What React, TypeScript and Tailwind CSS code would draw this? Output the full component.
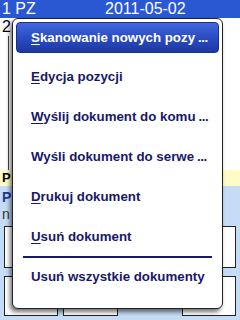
import React from "react";

const font = { fontFamily: '"Liberation Sans", Arial, sans-serif' };

const menuItems = [
  { first: "E", rest: "dycja pozycji", more: false },
  { first: "W", rest: "yślij dokument do komu", more: true },
  { first: "", rest: "Wyśli dokument do serwe", more: true },
  { first: "D", rest: "rukuj dokument", more: false },
  { first: "U", rest: "suń dokument", more: false },
];

function Dots() {
  return <span className="tracking-[-0.5px] ml-[3px]">...</span>;
}

function ContextMenu() {
  return (
    <div className="absolute left-[12px] top-[18px] w-[211px] h-[291px] rounded-[6px] border border-[#222] bg-white shadow-[-2px_3px_4px_rgba(0,0,0,0.55)] px-[3px] pt-[3px] text-[13.3px] font-bold">
      <div className="h-[31px] rounded-[4px] border border-[#1a2f8a] bg-gradient-to-b from-[#4468dc] via-[#2a4cc4] to-[#1d38a2] flex items-center pl-[14px] text-white whitespace-nowrap">
        <span>
          <span className="underline underline-offset-2">S</span>kanowanie nowych pozy
          <Dots />
        </span>
      </div>
      <div className="flex flex-col">
        {menuItems.map((it) => (
          <div
            key={it.rest}
            className="h-[40px] flex items-center pl-[15px] text-[#17196b] pt-[8px] whitespace-nowrap"
          >
            <span>
              {it.first && <span className="underline underline-offset-2">{it.first}</span>}
              {it.rest}
              {it.more && <Dots />}
            </span>
          </div>
        ))}
      </div>
      <div className="mt-[3px] mx-[7px] h-[2px] bg-[#17196b]" />
      <div className="h-[38px] flex items-center pl-[15px] text-[#17196b] whitespace-nowrap">
        Usuń wszystkie dokumenty
      </div>
    </div>
  );
}

export default function App() {
  return (
    <div className="relative w-[240px] h-[320px] overflow-hidden bg-white" style={font}>
      <div className="flex flex-col h-full">
        <div className="h-[18px] bg-[#2a58d2] text-white text-[16px] leading-[18px] flex">
          <span className="w-[105px] pl-[2px]">1 PZ</span>
          <span>2011-05-02</span>
        </div>
        <div className="h-[18px] text-black text-[16px] leading-[18px] pl-[2px]">2</div>
        <div className="flex-1 border-l border-[#444] ml-[8px]" />
        <div className="h-[16px] bg-[#fffbc6] text-black font-bold text-[13px] leading-[16px] pl-[2px]">
          P
        </div>
        <div className="h-[134px] bg-[#c4dcf6] px-[4px] pt-[2px] flex flex-col">
          <div className="text-[#1c3a9a] font-bold text-[14px] leading-[18px] -ml-[2px]">P</div>
          <div className="text-[#333] text-[14px] leading-[16px] -ml-[2px]">n</div>
          <div className="grid grid-cols-4 gap-x-[5px] gap-y-[8px] mt-[4px]">
            <div className="h-[42px] bg-white border border-[#222]" />
            <div className="h-[42px] bg-white border border-[#222]" />
            <div className="h-[42px] bg-white border border-[#222]" />
            <div className="h-[42px] bg-white border border-[#222]" />
            <div className="h-[40px] bg-white border border-[#222]" />
            <div className="h-[40px] bg-white border border-[#222]" />
            <div className="h-[40px]" />
            <div className="h-[40px] bg-white border border-[#222]" />
          </div>
        </div>
      </div>
      <ContextMenu />
    </div>
  );
}
